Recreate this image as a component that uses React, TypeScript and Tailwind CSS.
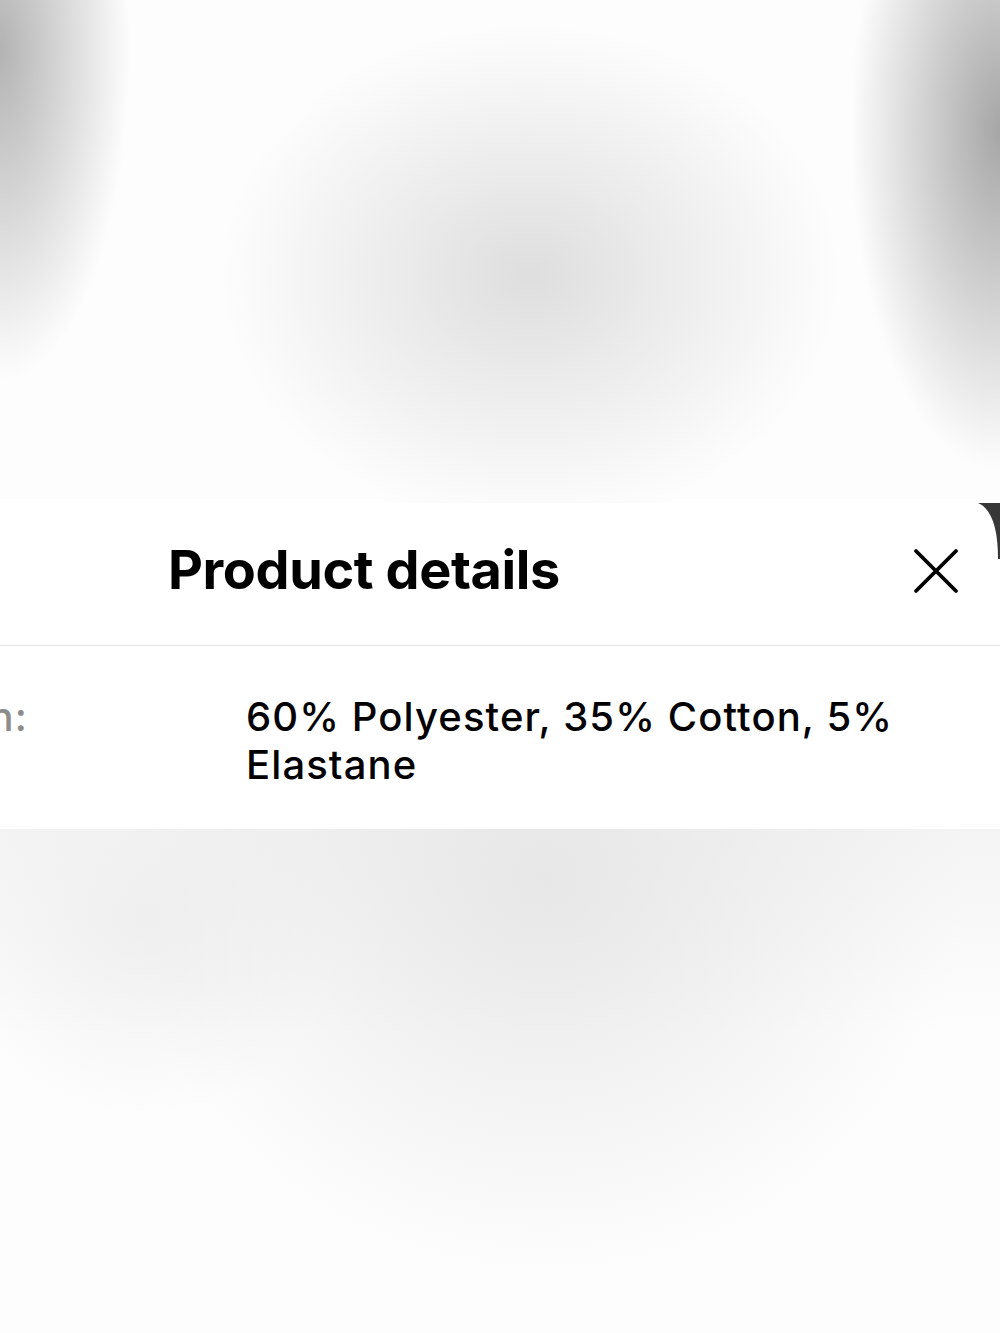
import React from "react";

export default function App() {
  return (
    <div className="w-[1000px] h-[1333px] flex flex-col overflow-hidden bg-white font-['Inter','Noto_Sans',sans-serif]">
      <div className="h-[503px] shrink-0 bg-[#fdfdfd] bg-[radial-gradient(ellipse_130px_330px_at_0px_50px,#b3b3b3,rgba(255,255,255,0)),radial-gradient(ellipse_150px_340px_at_1000px_130px,#a6a6a6,rgba(255,255,255,0)),radial-gradient(ellipse_310px_250px_at_530px_275px,#dedede,rgba(255,255,255,0))]" />
      <div className="relative h-[326px] shrink-0 bg-white flex flex-col">
        <svg className="absolute right-0 top-0" width="22" height="56" viewBox="0 0 22 56">
          <path d="M0 0 H22 V56 H20 C20 26 14 6 0 0 Z" fill="#373737" />
        </svg>
        <div className="h-[142px] flex items-start pl-[168px] pr-[41px] pt-[35px]">
          <h1 className="flex-1 text-[54px] leading-[64px] font-bold text-black tracking-[-0.4px]">
            Product details
          </h1>
          <button className="w-[46px] h-[46px] mt-[10px] flex items-center justify-center">
            <svg width="46" height="46" viewBox="0 0 46 46" fill="none">
              <path d="M3 3 L43 43 M43 3 L3 43" stroke="#000" strokeWidth="3.8" strokeLinecap="round" />
            </svg>
          </button>
        </div>
        <div className="h-px bg-[#e3e3e3]" />
        <div className="flex pt-[47px] text-[40px] leading-[48px] font-medium tracking-[1.1px]">
          <div className="w-[28px] shrink-0 flex justify-end">
            <span className="whitespace-nowrap text-[#8c8c8c]">Composition:</span>
          </div>
          <div className="ml-[218px] w-[720px] text-black">
            60% Polyester, 35% Cotton, 5% Elastane
          </div>
        </div>
      </div>
      <div className="flex-1 bg-[#fdfdfd] bg-[radial-gradient(ellipse_420px_400px_at_545px_50px,#e7e7e7,rgba(255,255,255,0)),radial-gradient(ellipse_200px_200px_at_140px_90px,#efefef,rgba(255,255,255,0)),linear-gradient(to_bottom,#f4f4f4,rgba(255,255,255,0)_40%)]" />
    </div>
  );
}
